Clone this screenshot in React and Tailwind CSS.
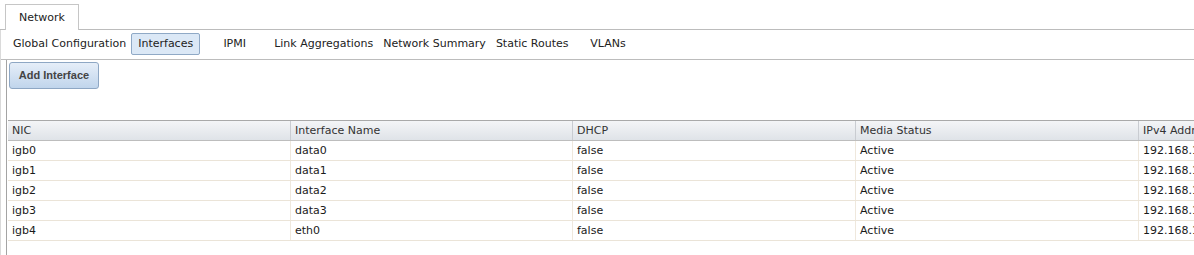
import React from "react";

const subTabs = [
  { label: "Global Configuration", pad: "pl-[5px] pr-[4px]" },
  { label: "Interfaces", pad: "px-[4px]", active: true },
  { label: "IPMI", pad: "px-[4px]" },
  { label: "Link Aggregations", pad: "px-[4px]" },
  { label: "Network Summary", pad: "px-[4px]" },
  { label: "Static Routes", pad: "px-[4px]" },
  { label: "VLANs", pad: "px-[4px]" },
];

const columns = ["NIC", "Interface Name", "DHCP", "Media Status", "IPv4 Address"];
const widths = ["w-[282px]", "w-[282px]", "w-[283px]", "w-[283px]", "w-[300px]"];

const rows = [
  ["igb0", "data0", "false", "Active", "192.168.1.10"],
  ["igb1", "data1", "false", "Active", "192.168.1.11"],
  ["igb2", "data2", "false", "Active", "192.168.1.12"],
  ["igb3", "data3", "false", "Active", "192.168.1.13"],
  ["igb4", "eth0", "false", "Active", "192.168.1.14"],
];

export default function App() {
  return (
    <div className="h-[255px] w-[1194px] overflow-hidden bg-white flex flex-col font-['DejaVu_Sans',sans-serif] text-[11px] text-[#1a1a1a]">
      {/* Top tab strip */}
      <div className="h-[30px] shrink-0 flex items-end border-b border-[#bcbcbc] pl-[5px]">
        <div className="h-[26px] w-[74px] -mb-px border border-b-0 border-[#c6c6c6] bg-white flex items-center justify-center pt-[2px] text-[#222]">
          Network
        </div>
      </div>

      <div className="flex-1 flex flex-col border-l border-[#dadada]">
        {/* Sub tabs */}
        <div className="shrink-0 flex pl-[6px] pt-[3px] pb-[4px] border-b border-[#bcbcbc]">
          {subTabs.map((t) => (
            <div
              key={t.label}
              className={
                "h-[22px] min-w-[69px] flex items-center justify-center border rounded-[2px] whitespace-nowrap text-[#222] " +
                t.pad +
                (t.active
                  ? " border-[#8fa9c6] bg-[#dbe8f6]"
                  : " border-transparent")
              }
            >
              {t.label}
            </div>
          ))}
        </div>

        {/* Panel */}
        <div className="flex-1 ml-[5px] border-l border-[#a4a4a4] pt-[2px]">
          <div className="ml-[2px] h-[27px] w-[90px] flex items-center justify-center rounded-[3px] border border-[#8ea7c4] bg-gradient-to-b from-[#e6eef8] to-[#c0d5ec] font-['Liberation_Sans',sans-serif] font-bold text-[11px] text-[#444]">
            Add Interface
          </div>

          <div className="mt-[31px] ml-[1px] flex flex-col">
            {/* header */}
            <div className="flex h-[21px] border-t border-b border-t-[#a9a9a9] border-b-[#bdbdbd] bg-gradient-to-b from-[#f4f5f7] to-[#dfe3e8]">
              {columns.map((c, i) => (
                <div
                  key={c}
                  className={
                    "shrink-0 flex items-center pl-[4px] pt-[1px] whitespace-nowrap overflow-hidden text-[#333] " +
                    widths[i] +
                    (i > 0 ? " border-l border-[#c9ccd1]" : "")
                  }
                >
                  {c}
                </div>
              ))}
            </div>
            {rows.map((r) => (
              <div key={r[0]} className="flex h-[20px] border-b border-[#ebe4d8]">
                {r.map((v, i) => (
                  <div
                    key={i}
                    className={
                      "shrink-0 flex items-center pl-[4px] pt-[2px] whitespace-nowrap overflow-hidden " +
                      widths[i] +
                      (i > 0 ? " border-l border-[#efe8dd]" : "")
                    }
                  >
                    {v}
                  </div>
                ))}
              </div>
            ))}
          </div>
        </div>
      </div>
    </div>
  );
}
